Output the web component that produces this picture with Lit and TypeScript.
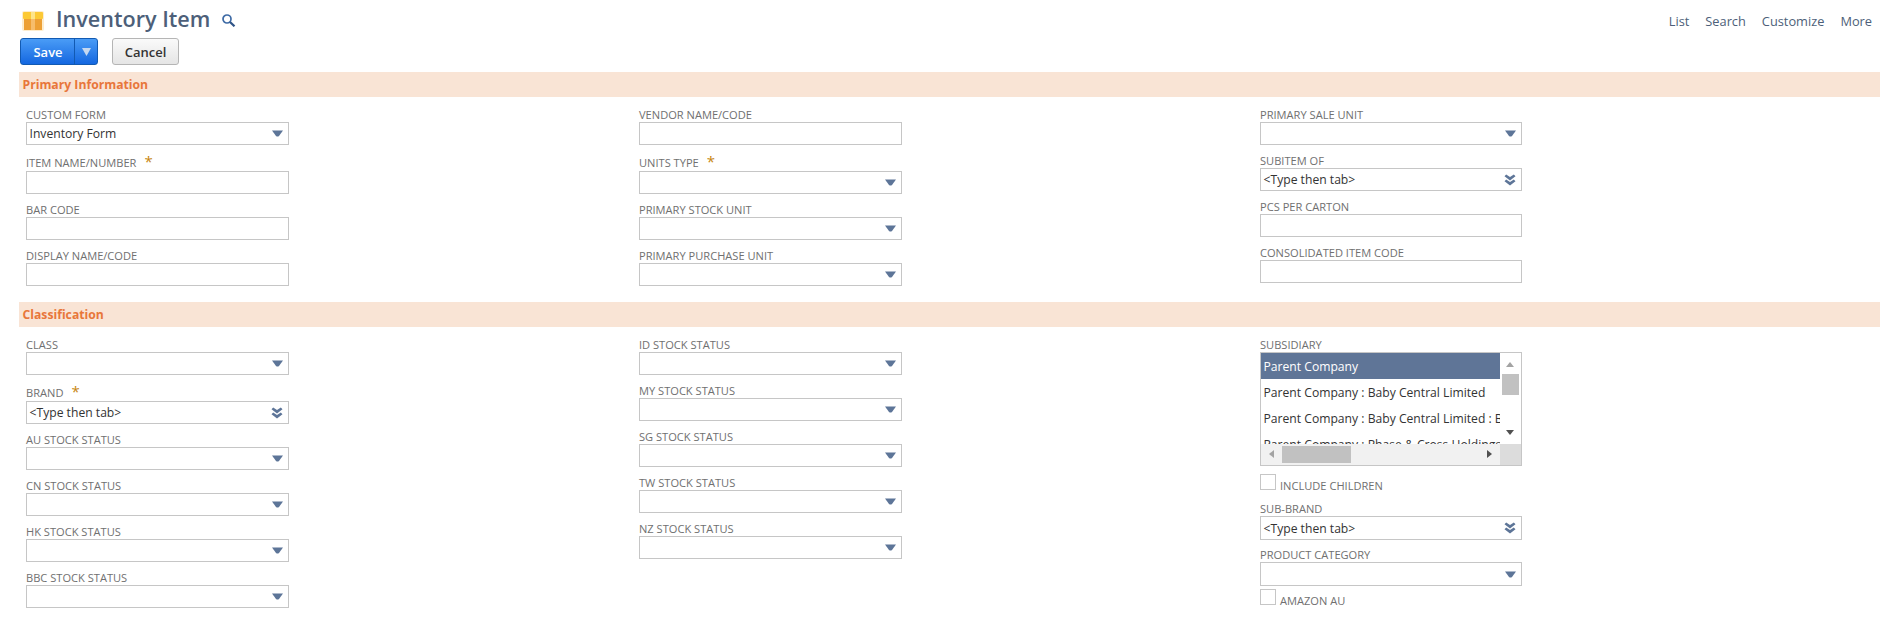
import { LitElement, html, css, svg } from "lit";
import { customElement } from "lit/decorators.js";

type F = { l: string; k: "s" | "t" | "a"; req?: boolean; v?: string; tall?: boolean };

const C1A: F[] = [
  { l: "Custom Form", k: "s", v: "Inventory Form" },
  { l: "Item Name/Number", k: "t", req: true },
  { l: "Bar Code", k: "t" },
  { l: "Display Name/Code", k: "t" },
];
const C2A: F[] = [
  { l: "Vendor Name/Code", k: "t" },
  { l: "Units Type", k: "s", req: true },
  { l: "Primary Stock Unit", k: "s" },
  { l: "Primary Purchase Unit", k: "s" },
];
const C3A: F[] = [
  { l: "Primary Sale Unit", k: "s" },
  { l: "Subitem Of", k: "a" },
  { l: "PCS Per Carton", k: "t" },
  { l: "Consolidated Item Code", k: "t" },
];
const C1B: F[] = [
  { l: "Class", k: "s" },
  { l: "Brand", k: "a", req: true },
  { l: "AU Stock Status", k: "s" },
  { l: "CN Stock Status", k: "s" },
  { l: "HK Stock Status", k: "s" },
  { l: "BBC Stock Status", k: "s" },
];
const C2B: F[] = [
  { l: "ID Stock Status", k: "s" },
  { l: "MY Stock Status", k: "s" },
  { l: "SG Stock Status", k: "s" },
  { l: "TW Stock Status", k: "s" },
  { l: "NZ Stock Status", k: "s" },
];

const caret = svg`<svg class="ic" width="11" height="7" viewBox="0 0 11 7"><path d="M0 .5h11L7 6Q5.500 7 4 6Z" fill="#5d7598"/></svg>`;
const dbl = svg`<svg class="ic" width="12" height="12" viewBox="0 0 12 12"><path d="M.5 2.300 2.200.5 6 3 9.800.5 11.500 2.300 6 6.500Z M.5 7.300 2.200 5.500 6 8 9.800 5.500 11.500 7.300 6 11.500Z" fill="#5d7598"/></svg>`;

@customElement("app-root")
export class AppRoot extends LitElement {
  static styles = css`
    :host {
      display: block;
      width: 1895px;
      height: 620px;
      overflow: hidden;
      background: #fff;
      font-family: "Open Sans", "Liberation Sans", sans-serif;
      color: #333;
    }
    .top {
      height: 38px;
      display: flex;
      align-items: center;
      justify-content: space-between;
      padding: 4px 23px 0 22px;
      box-sizing: border-box;
    }
    .ttl { display: flex; align-items: center; }
    .ttl h1 {
      margin: 0 12px 0 12px;
      font-size: 21.600px;
      font-weight: 600;
      color: #4d5f79;
      line-height: 30px;
      position: relative;
      top: -2px;
    }
    .glass { position: relative; top: -1px; }
    .nav { display: flex; gap: 16px; font-size: 12.800px; color: #4d5f79; }
    .bar {
      height: 27px;
      display: flex;
      gap: 14px;
      padding-left: 20px;
      margin-bottom: 7px;
    }
    .save {
      width: 78px;
      box-sizing: border-box;
      display: flex;
      border: 1px solid #125ab2;
      border-radius: 3px;
      background: linear-gradient(#4a9cf6, #1467e0);
      color: #fff;
      font-size: 13px;
      font-weight: 600;
      align-items: stretch;
    }
    .save .m { width: 52px; display: flex; align-items: center; justify-content: center; padding-left: 1px; }
    .save .d { flex: 1; display: flex; align-items: center; justify-content: center; border-left: 1px solid #125ab2; }
    .cancel {
      width: 67px;
      box-sizing: border-box;
      border: 1px solid #b5b5b5;
      border-radius: 3px;
      background: linear-gradient(#fafafa, #e5e5e5);
      color: #333;
      font-size: 13px;
      font-weight: 600;
      display: flex;
      align-items: center;
      justify-content: center;
    }
    .sec {
      height: 25px;
      margin-left: 19px;
      width: 1861px;
      background: #f9e4d5;
      color: #e8763a;
      font-size: 12.200px;
      font-weight: 700;
      line-height: 25px;
      padding-left: 3.500px;
      box-sizing: border-box;
    }
    .cols {
      display: grid;
      grid-template-columns: 613px 621px 262px;
      padding: 8px 0 0 26px;
    }
    .a { height: 197px; }
    .f { display: block; margin-bottom: 6px; width: 263px; }
    .col3 .f { width: 262px; }
    .f.tall { margin-bottom: 5px; }
    .f.tall .in { height: 24px; }
    .lb {
      height: 17px;
      display: flex;
      align-items: center;
      box-sizing: border-box;
      padding-top: 2px;
      font-size: 11.100px;
      color: #707070;
      text-transform: uppercase;
      white-space: nowrap;
      line-height: 15px;
    }
    .lb.rq { height: 20px; padding-top: 2px; }
    .star { color: #c8860f; font-size: 15px; margin-left: 8px; line-height: 14px; position: relative; top: -1px; }
    .in {
      height: 23px;
      box-sizing: border-box;
      border: 1px solid #c6c6c6;
      display: flex;
      align-items: center;
      justify-content: space-between;
      padding: 0 5px 0 2.500px;
      font-size: 12.150px;
      color: #333;
      white-space: nowrap;
    }
    .ic { flex: none; }
    .list {
      height: 114px;
      box-sizing: border-box;
      border: 1px solid #c6c6c6;
      position: relative;
      overflow: hidden;
      font-size: 12.150px;
      margin-bottom: 8px;
    }
    .rows { width: 239px; height: 91px; overflow: hidden; }
    .row { height: 26px; line-height: 27px; padding-left: 2.500px; white-space: nowrap; overflow: hidden; box-sizing: border-box; }
    .row.sel { background: #5f7597; color: #fff; }
    .vs {
      position: absolute; right: 0; top: 0; width: 21px; height: 91px; background: #fff;
    }
    .vs .up { position: absolute; left: 6px; top: 9px; width: 0; height: 0; border: 4px solid transparent; border-top: 0; border-bottom: 5px solid #a3a3a3; }
    .vs .dn { position: absolute; left: 6px; top: 77px; width: 0; height: 0; border: 4px solid transparent; border-bottom: 0; border-top: 5px solid #505050; }
    .vs .th { position: absolute; left: 2px; top: 21px; width: 17px; height: 21px; background: #c1c1c1; }
    .hs { position: absolute; left: 0; bottom: 0; width: 239px; height: 21px; background: #f1f1f1; }
    .hs .l { position: absolute; left: 8px; top: 6px; width: 0; height: 0; border: 4.500px solid transparent; border-left: 0; border-right: 5px solid #a3a3a3; }
    .hs .r { position: absolute; right: 8px; top: 6px; width: 0; height: 0; border: 4.500px solid transparent; border-right: 0; border-left: 5px solid #505050; }
    .hs .th { position: absolute; left: 21px; top: 2px; width: 69px; height: 17px; background: #c1c1c1; }
    .cn { position: absolute; right: 0; bottom: 0; width: 21px; height: 21px; background: #dcdcdc; }
    .chk { display: flex; align-items: flex-end; height: 16px; margin-bottom: 9px; font-size: 11.100px; color: #707070; text-transform: uppercase; white-space: nowrap; }
    .chk i { display: block; width: 16px; height: 16px; box-sizing: border-box; border: 1px solid #c6c6c6; margin-right: 4px; flex: none; }
    .chk span { line-height: 13px; position: relative; top: 2px; }
    .chk.last { margin-top: -2px; }
  `;

  field(f: F) {
    return html`<div class="f ${f.tall ? "tall" : ""}">
      <div class="lb ${f.req ? "rq" : ""}">${f.l}${f.req ? html`<span class="star">*</span>` : ""}</div>
      <div class="in"><span>${f.k === "a" ? "<Type then tab>" : f.v ?? ""}</span>${f.k === "s" ? caret : f.k === "a" ? dbl : ""}</div>
    </div>`;
  }

  render() {
    return html`
      <div class="top">
        <div class="ttl">
          <svg width="22" height="20" viewBox="0 0 22 20">
            <rect x="0" y="0" width="22" height="20" rx="2" fill="#fdeccd"/>
            <rect x="2" y="8" width="18" height="11" fill="#eda035"/>
            <rect x="1" y="1" width="20" height="7" rx="1" fill="#fcc935"/>
            <rect x="9" y="1" width="4" height="7" fill="#fde48a"/>
            <rect x="9" y="8" width="4" height="11" fill="#f6bd6c"/>
          </svg>
          <h1>Inventory Item</h1>
          <svg class="glass" width="14" height="13" viewBox="0 0 14 13"><circle cx="5" cy="5" r="4" fill="none" stroke="#3d6aa5" stroke-width="1.700"/><path d="M8 8 12.500 12.300" stroke="#2f5487" stroke-width="2.200"/></svg>
        </div>
        <div class="nav"><span>List</span><span>Search</span><span>Customize</span><span>More</span></div>
      </div>
      <div class="bar">
        <div class="save"><div class="m">Save</div><div class="d"><svg width="9" height="8" viewBox="0 0 9 8"><path d="M0 0h9L4.500 8Z" fill="#c5d8f0"/></svg></div></div>
        <div class="cancel">Cancel</div>
      </div>
      <div class="sec">Primary Information</div>
      <div class="cols a">
        <div>${C1A.map((f) => this.field(f))}</div>
        <div>${C2A.map((f) => this.field(f))}</div>
        <div class="col3">${C3A.map((f) => this.field(f))}</div>
      </div>
      <div class="sec">Classification</div>
      <div class="cols">
        <div>${C1B.map((f) => this.field(f))}</div>
        <div>${C2B.map((f) => this.field(f))}</div>
        <div class="col3">
          <div class="lb">Subsidiary</div>
          <div class="list">
            <div class="rows">
              <div class="row sel">Parent Company</div>
              <div class="row">Parent Company : Baby Central Limited</div>
              <div class="row">Parent Company : Baby Central Limited : Baby</div>
              <div class="row">Parent Company : Phase & Cross Holdings</div>
            </div>
            <div class="vs"><div class="up"></div><div class="th"></div><div class="dn"></div></div>
            <div class="hs"><div class="l"></div><div class="th"></div><div class="r"></div></div>
            <div class="cn"></div>
          </div>
          <div class="chk"><i></i><span>Include Children</span></div>
          ${this.field({ l: "Sub-Brand", k: "a", tall: true })}
          ${this.field({ l: "Product Category", k: "s", tall: true })}
          <div class="chk last"><i></i><span>Amazon AU</span></div>
        </div>
      </div>
    `;
  }
}
